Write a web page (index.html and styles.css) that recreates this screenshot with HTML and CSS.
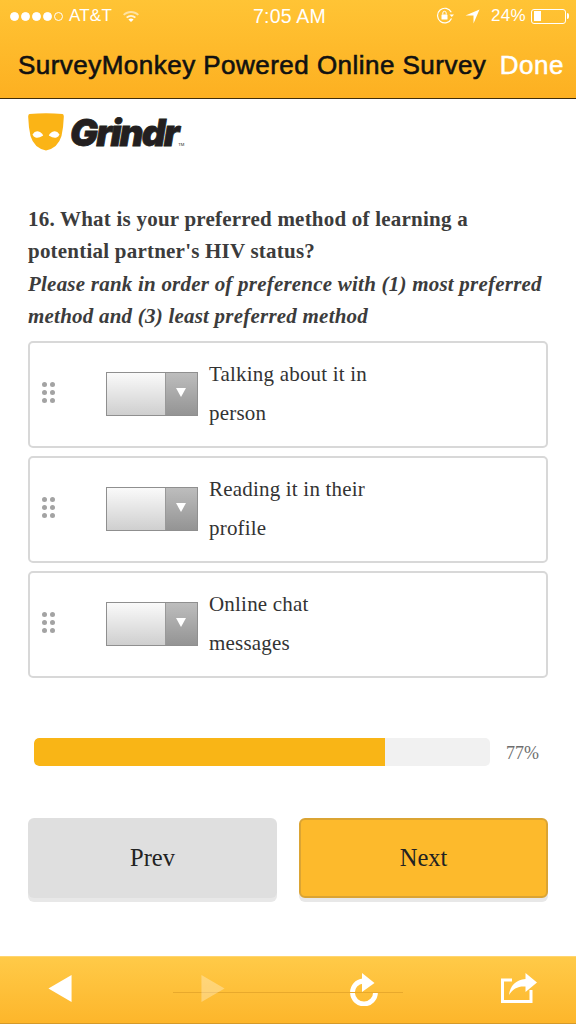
FILE: index.html
```html
<!DOCTYPE html>
<html lang="en">
<head>
<meta charset="utf-8">
<title>SurveyMonkey Powered Online Survey</title>
<link rel="stylesheet" href="styles.css">
</head>
<body>
<div class="page">
  <header class="top">
    <div class="status">
      <div class="status-left">
        <span class="signal"><i></i><i></i><i></i><i></i><i class="off"></i></span>
        <span class="carrier">AT&amp;T</span>
        <svg class="wifi" width="18" height="14" viewBox="0 0 18 14"><path d="M1 5.2C5.5.8 12.500.8 17 5.200L15.600 6.600C11.800 3 6.200 3 2.400 6.600Z" fill="#fff" opacity=".55"/><path d="M4 8C7 5.200 11 5.200 14 8L12.700 9.300C10.400 7.300 7.600 7.300 5.300 9.300Z" fill="#fff" opacity=".8"/><path d="M6.400 10.400C8 9.100 10 9.100 11.600 10.400L9 13Z" fill="#fff"/></svg>
      </div>
      <div class="clock">7:05 AM</div>
      <div class="status-right">
        <svg class="lock" width="20" height="20" viewBox="0 0 20 20"><path d="M16.500 12.500A7.300 7.300 0 1 1 16.300 6.200" fill="none" stroke="#fff" stroke-width="1.200"/><path d="M14.500 8.500H19L16.800 11Z" fill="#fff"/><rect x="6.500" y="8.500" width="6" height="5" rx=".6" fill="#fff"/><path d="M7.800 8.500V7A1.700 1.700 0 0 1 11.200 7V8.500" fill="none" stroke="#fff" stroke-width="1"/></svg>
        <svg class="arrow" width="15" height="15" viewBox="0 0 15 15"><path d="M14.500.5L8.500 14.500V6.500H.5Z" fill="#fff"/></svg>
        <span class="pct">24%</span>
        <span class="battery"><span class="charge"></span></span><span class="nub"></span>
      </div>
    </div>
    <div class="titlebar">
      <h1>SurveyMonkey Powered Online Survey</h1>
      <span class="done">Done</span>
    </div>
  </header>

  <main class="survey">
    <div class="brand">
      <svg class="mask" width="36" height="38" viewBox="0 0 36 38"><path d="M1.500 1Q18-.5 34.500 1Q36 1.500 35.800 4Q35.500 14 33.500 23Q30 35 18 37.500Q6 35 2.500 23Q.5 14 .2 4Q0 1.500 1.500 1Z" fill="#fbb416"/><path d="M4.500 21.500Q7.500 16.500 12 19Q14.800 20.500 15.200 22.500Q10.500 25.500 7.500 24.500Q5.500 23.800 4.500 21.500Z" fill="#fff"/><path d="M31.500 21.500Q28.500 16.500 24 19Q21.200 20.500 20.800 22.500Q25.500 25.500 28.500 24.500Q30.500 23.800 31.500 21.500Z" fill="#fff"/></svg>
      <span class="wordmark">Grindr<span class="tm">TM</span></span>
    </div>

    <div class="question">
      <p class="q-title">16. What is your preferred method of learning a potential partner's HIV status?</p>
      <p class="q-note">Please rank in order of preference with (1) most preferred method and (3) least preferred method</p>
    </div>

    <div class="ranks">
      <div class="rank">
        <span class="grip"><i></i><i></i><i></i><i></i><i></i><i></i></span>
        <span class="select"><span class="select-btn"><span class="tri"></span></span></span>
        <span class="label">Talking about it in person</span>
      </div>
      <div class="rank">
        <span class="grip"><i></i><i></i><i></i><i></i><i></i><i></i></span>
        <span class="select"><span class="select-btn"><span class="tri"></span></span></span>
        <span class="label">Reading it in their profile</span>
      </div>
      <div class="rank">
        <span class="grip"><i></i><i></i><i></i><i></i><i></i><i></i></span>
        <span class="select"><span class="select-btn"><span class="tri"></span></span></span>
        <span class="label">Online chat messages</span>
      </div>
    </div>

    <div class="progress">
      <div class="track"><div class="fill" style="width:77%"></div></div>
      <span class="progress-num">77%</span>
    </div>

    <div class="actions">
      <button class="btn btn-prev">Prev</button>
      <button class="btn btn-next">Next</button>
    </div>
  </main>

  <footer class="toolbar">
    <div class="slider"></div>
    <svg class="tool tool-back" width="24" height="27" viewBox="0 0 24 28"><path d="M0 14L24 0V28Z" fill="#fff"/></svg>
    <svg class="tool tool-fwd" width="24" height="27" viewBox="0 0 24 28"><path d="M24 14L0 0V28Z" fill="#fff"/></svg>
    <svg class="tool tool-reload" width="29" height="33" viewBox="0 0 29 33"><path d="M13 8A11.500 11.500 0 1 0 25.500 19.500" fill="none" stroke="#fff" stroke-width="4.800"/><path d="M12 0L24.500 10L12 19Z" fill="#fff"/></svg>
    <svg class="tool tool-share" width="36" height="30" viewBox="0 0 36 30"><path d="M11 7H1.500V28.500H30V17" fill="none" stroke="#fff" stroke-width="3"/><path d="M24.500 0L36 9.500L24.500 19V13.500C17 13 12 15.500 8 22C9 13 15 6.500 24.500 6Z" fill="#fff"/></svg>
  </footer>
</div>
</body>
</html>
```
FILE: styles.css
```css
* { box-sizing: border-box; }
html, body { margin: 0; padding: 0; }
body { background: #fff; font-family: "Liberation Serif", "Times New Roman", serif; }
.page { width: 576px; height: 1024px; display: flex; flex-direction: column; overflow: hidden; }

.top {
  height: 99px;
  background: linear-gradient(#ffc435, #fdb021);
  border-bottom: 1px solid #3f2c0a;
  font-family: "Liberation Sans", Arial, sans-serif;
}
.status {
  height: 32px;
  padding: 0 7px 0 10px;
  display: grid;
  grid-template-columns: 1fr auto 1fr;
  align-items: center;
  color: #fff;
}
.status-left { display: flex; align-items: center; }
.signal { display: flex; gap: 2px; }
.signal i { width: 9px; height: 9px; border-radius: 50%; background: #fff; border: 1px solid #fff; }
.signal i.off { background: none; }
.carrier { font-size: 17px; margin-left: 6px; letter-spacing: .2px; }
.wifi { margin-left: 10px; }
.clock { font-size: 19.500px; letter-spacing: .2px; }
.status-right { display: flex; align-items: center; justify-content: flex-end; }
.lock { margin-right: 10px; }
.arrow { margin-right: 11px; }
.pct { font-size: 17px; margin-right: 5px; letter-spacing: .3px; }
.battery { width: 35px; height: 15px; border: 1px solid #fff; border-radius: 3px; padding: 1.500px; display: block; }
.charge { display: block; width: 7px; height: 100%; background: #fff; }
.nub { width: 2px; height: 6px; background: #fff; border-radius: 0 2px 2px 0; margin-left: 1px; }

.titlebar {
  height: 66px;
  padding: 0 12px 0 18px;
  display: flex;
  align-items: center;
  justify-content: space-between;
}
.titlebar h1 { margin: 0; font-size: 26px; font-weight: 400; color: #111; letter-spacing: .47px; -webkit-text-stroke: .6px #111; white-space: nowrap; }
.done { color: #fff; font-size: 26px; letter-spacing: .5px; -webkit-text-stroke: .5px #fff; }

.survey { flex: 1; padding: 14px 28px 0; display: flex; flex-direction: column; }
.brand { height: 38px; display: flex; align-items: flex-start; gap: 6px; }
.wordmark {
  font-family: Inter, "Liberation Sans", sans-serif;
  font-size: 37px;
  font-weight: 900;
  font-style: italic;
  color: #231f20;
  letter-spacing: -1.800px;
  -webkit-text-stroke: .8px #231f20;
  line-height: 38px;
  margin-top: 1px;
  white-space: nowrap;
}
.tm { font-size: 4px; font-weight: 400; font-style: normal; letter-spacing: 0; -webkit-text-stroke: 0; }

.question { margin-top: 52px; color: #3c3c3c; font-size: 21px; line-height: 32.400px; font-weight: 700; }
.q-title, .q-note { margin: 0; }
.q-title { letter-spacing: .22px; max-width: 460px; }
.q-note { font-style: italic; letter-spacing: .22px; }

.ranks { margin-top: 8px; display: flex; flex-direction: column; gap: 8px; }
.rank {
  height: 107px;
  border: 2px solid #d8d8d8;
  border-radius: 5px;
  padding: 0 12px;
  display: flex;
  align-items: flex-start;
}
.grip { width: 13px; margin-top: 39px; display: grid; grid-template-columns: 5px 5px; gap: 3px; flex: none; }
.grip i { width: 5px; height: 5px; border-radius: 50%; background: #a3a3a3; }
.select {
  width: 92px;
  height: 44px;
  margin: 29px 0 0 51px;
  border: 1px solid #8f8f8f;
  background: linear-gradient(#fafafa, #cfcfcf);
  display: flex;
  justify-content: flex-end;
  flex: none;
}
.select-btn {
  width: 32px;
  background: linear-gradient(#bdbdbd, #949494);
  border-left: 1px solid #999;
  display: flex;
  justify-content: center;
  padding: 15px 2px 0 0;
}
.tri { width: 0; height: 0; border: 5.500px solid transparent; border-top: 9px solid #fff; border-bottom: 0; }
.label { width: 168px; margin: 12px 0 0 11px; font-size: 21px; line-height: 39px; color: #333; letter-spacing: .2px; }

.progress { margin: 60px 0 0 6px; display: flex; align-items: center; }
.track { width: 456px; height: 28px; background: #f1f1f1; border-radius: 5px; overflow: hidden; }
.fill { height: 100%; background: #f9b516; border-radius: 5px 0 0 5px; }
.progress-num { margin-left: 16px; padding-top: 3px; font-size: 18px; color: #6e6e6e; }

.actions { margin-top: 52px; display: flex; justify-content: space-between; }
.btn {
  width: 249px;
  height: 80px;
  border-radius: 6px;
  font-family: inherit;
  font-size: 24.500px;
  color: #222;
  padding: 0;
  box-shadow: 0 4px 0 #e8e8e8;
}
.btn-prev { background: #dfdfdf; border: 0; }
.btn-next { background: #fdba2c; border: 2px solid #dba433; }

.toolbar {
  height: 68px;
  background: linear-gradient(#ffca48, #fdb62b);
  border-top: 1px solid #ffd56f;
  border-bottom: 1px solid #d69a2a;
  position: relative;
  display: flex;
  align-items: flex-start;
  padding-left: 48px;
}
.tool { display: block; flex: none; }
.tool-back { margin-top: 18px; }
.tool-fwd { margin: 18px 0 0 129px; opacity: .3; }
.tool-reload { margin: 16px 0 0 125px; }
.tool-share { margin: 16px 0 0 122px; }
.slider { position: absolute; left: 173px; top: 35px; width: 230px; height: 1px; background: #e8a92c; }
```
